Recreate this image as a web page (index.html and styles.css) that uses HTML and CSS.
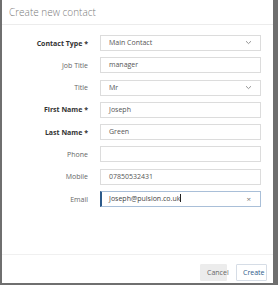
FILE: index.html
```
<!DOCTYPE html>
<html>
<head>
<meta charset="utf-8">
<link rel="stylesheet" href="styles.css">
</head>
<body>
<div class="modal">
  <div class="header">Create new contact</div>
  <div class="form">
    <div class="row"><label class="lbl req">Contact Type *</label><div class="field select">Main Contact<span class="chev"><svg width="7" height="5" viewBox="0 0 7 5"><path d="M1 1.2 L3.5 3.6 L6 1.2" fill="none" stroke="#888" stroke-width="0.9"/></svg></span></div></div>
    <div class="row"><label class="lbl">Job Title</label><div class="field">manager</div></div>
    <div class="row"><label class="lbl">Title</label><div class="field select">Mr<span class="chev"><svg width="7" height="5" viewBox="0 0 7 5"><path d="M1 1.2 L3.5 3.6 L6 1.2" fill="none" stroke="#888" stroke-width="0.9"/></svg></span></div></div>
    <div class="row"><label class="lbl req">First Name *</label><div class="field">Joseph</div></div>
    <div class="row"><label class="lbl req">Last Name *</label><div class="field">Green</div></div>
    <div class="row"><label class="lbl">Phone</label><div class="field"></div></div>
    <div class="row"><label class="lbl">Mobile</label><div class="field">07850532431</div></div>
    <div class="row"><label class="lbl">Email</label><div class="field focus">Joseph@pulsion.co.uk<span class="caret"></span><span class="clear">×</span></div></div>
  </div>
  <div class="footer">
    <button class="btn cancel">Cancel</button>
    <button class="btn create">Create</button>
  </div>
</div>
</body>
</html>
```
FILE: styles.css
```
html, body {
  margin: 0;
  padding: 0;
}
body {
  background: #6f6f6f;
  width: 278px;
  height: 285px;
  overflow: hidden;
  font-family: "Open Sans", "Noto Sans", sans-serif;
}
.modal {
  margin-left: 2px;
  width: 271px;
  height: 283px;
  background: #fff;
  display: flex;
  flex-direction: column;
}
.header {
  height: 25px;
  box-sizing: border-box;
  border-bottom: 1px solid #ececec;
  padding-left: 7px;
  font-size: 10px;
  font-weight: 300;
  color: #7a7a7a;
  line-height: 25px;
}
.form {
  padding-top: 10px;
  display: flex;
  flex-direction: column;
  gap: 6.3px;
  flex: 1;
}
.row {
  display: grid;
  grid-template-columns: 86px 161px;
  column-gap: 12px;
  align-items: center;
  height: 16px;
}
.lbl {
  text-align: right;
  font-size: 7px;
  color: #666;
}
.lbl.req {
  font-weight: 700;
  color: #333;
}
.field {
  position: relative;
  box-sizing: border-box;
  height: 16px;
  border: 1px solid #dcdcdc;
  font-size: 7px;
  color: #555;
  line-height: 14px;
  padding-left: 8px;
}
.chev {
  position: absolute;
  right: 8px;
  top: 4px;
  display: flex;
}
.field.focus {
  border-color: #a9bfd8;
  border-left: 2px solid #2c5a8a;
  padding-left: 7px;
  color: #444;
}
.caret {
  display: inline-block;
  width: 0.7px;
  height: 8px;
  background: #222;
  vertical-align: -1px;
}
.clear {
  position: absolute;
  right: 9px;
  top: 0;
  font-size: 8px;
  color: #777;
}
.footer {
  height: 29px;
  box-sizing: border-box;
  border-top: 1px solid #f0f0f0;
  display: flex;
  justify-content: flex-end;
  align-items: flex-start;
  gap: 9px;
  padding: 9px 6px 0 0;
}
.btn {
  height: 17px;
  box-sizing: border-box;
  font-family: "Open Sans", "Noto Sans", sans-serif;
  font-size: 7px;
  padding: 0 6px;
  border-radius: 1px;
  margin: 0;
}
.cancel {
  background: #ececec;
  border: 1px solid #ececec;
  color: #666;
  width: 27px;
}
.create {
  background: #fff;
  border: 1px solid #d6dde6;
  color: #2c5a8a;
  width: 31px;
}
```
